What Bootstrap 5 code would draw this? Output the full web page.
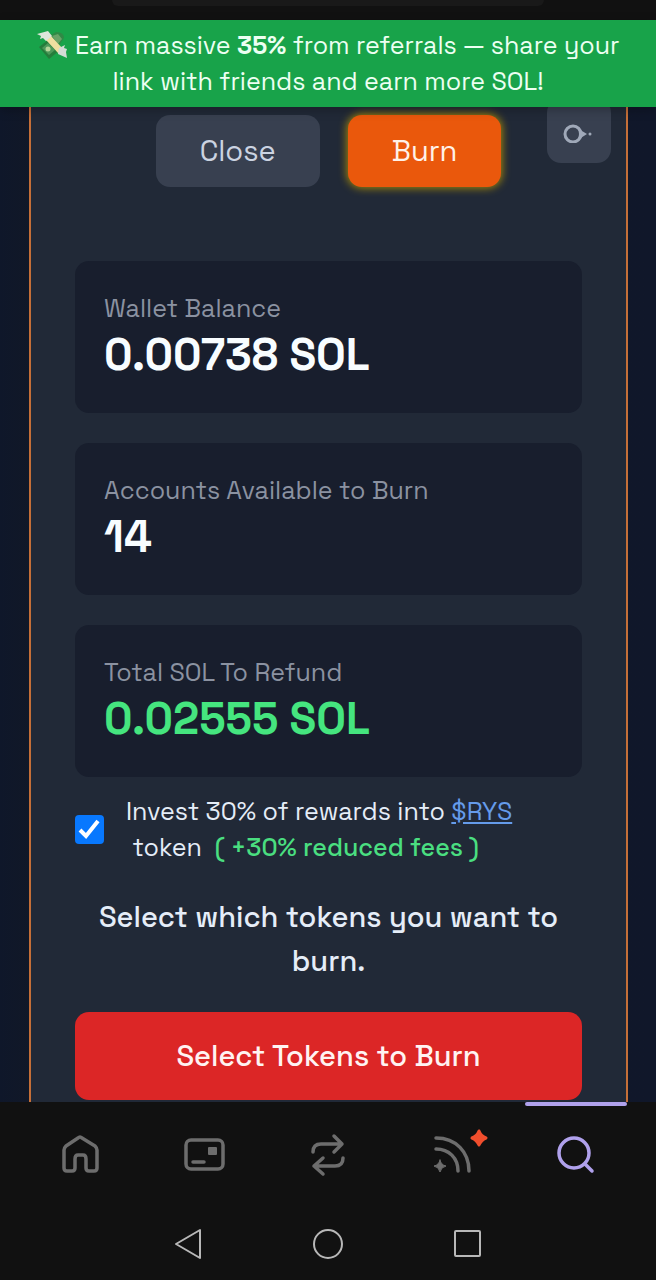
<!DOCTYPE html>
<html lang="en">
<head>
<meta charset="utf-8">
<meta name="viewport" content="width=device-width, initial-scale=1">
<title>Burn tokens</title>
<link href="https://cdn.jsdelivr.net/npm/bootstrap@5.3.0/dist/css/bootstrap.min.css" rel="stylesheet">
<style>
  body { background: #111; color: #e5edf8; font-family: "Space Grotesk", Inter, "Liberation Sans", sans-serif; font-size: 25px; line-height: 36px; }
  .address-strip { height: 20px; background: #111; }
  .address-pill { width: 66%; height: 6px; background: #191919; border-radius: 0 0 12px 12px; }
  .promo { background: #18a34a; color: #ecfff2; padding: 7px 28px 8px; box-shadow: 0 3px 10px rgba(0,0,0,.25); z-index: 2; }
  .promo svg { width: 30px; height: 28px; vertical-align: -5px; margin-right: 2px; }
  .page-area { background: linear-gradient(90deg, #0f172a, #111827 5%, #10172a); padding: 0 28px 0 29px; }
  .burn-panel { background: #212937; border: solid #c56f38; border-width: 0 2px; padding: 8px 44px 2px; }
  .mode { font-size: 29px; line-height: 44px; padding: 14px 44px; border: 0; border-radius: 14px; }
  .mode-close, .mode-close:hover, .tool-btn, .tool-btn:hover { background: #384050; color: #cbd3e1; }
  .mode-burn, .mode-burn:hover { background: #ea580c; color: #fff1e8; box-shadow: 0 0 8px 1px #a88c08; }
  .mode-row { gap: 28px; margin-bottom: 74px; }
  .tool-btn { top: -8px; right: 15px; width: 64px; height: 64px; border: 0; border-radius: 14px; padding: 0; }
  .stat { background: #181e2d; border-radius: 14px; padding: 29px; }
  .stat dt { color: #8b92a1; font-weight: 400; line-height: 36px; }
  .stat dd { color: #f8fdff; font-size: 44px; line-height: 58px; font-weight: 600; }
  .stat dd.gain { color: #45e57f; }
  .stats { gap: 30px; }
  .invest { gap: 22px; margin-top: 16px; }
  .invest .form-check-input { width: 29px; height: 29px; border: 0; border-radius: 4px; }
  .invest .form-check-input:checked { background-color: #0878fe; background-image: none; }
  .tick { pointer-events: none; inset: 0; }
  .token-link { color: #659bea; }
  .bonus { color: #4ade80; font-weight: 500; }
  .prompt { font-size: 29px; line-height: 44px; font-weight: 500; padding: 0 20px; margin: 30px 0 29px; }
  .select-btn, .select-btn:hover { background: #dc2626; color: #fff3f2; font-size: 29px; line-height: 44px; font-weight: 500; padding: 22px; border: 0; border-radius: 14px; }
  .tabs { height: 106px; padding: 0 18px; }
  .tabs a { color: #6d6d6d; }
  .tabs a.active { color: #b0a1ec; }
  .tabs a.active::before { content: ""; position: absolute; top: 0; left: 11px; right: 11px; height: 4px; border-radius: 2px; background: #b0a1ec; }
  .tabs svg { overflow: visible; }
  .system { height: 72px; padding-bottom: 4px; }
  .system button { width: 140px; color: #b8b8b8; background: none; border: 0; padding: 0; }
</style>
</head>
<body class="d-flex flex-column min-vh-100">
<div class="address-strip"><div class="address-pill mx-auto"></div></div>
<div class="promo text-center position-relative">
  <svg viewBox="0 0 30 28" aria-hidden="true">
    <path d="M12 5 19 1q8 0 8 6l-6 9z" fill="#2f8a45"/><path d="M15 5 21 3l4 5-4 5z" fill="#69a368"/>
    <path d="M2 16 11 9l12 10-11 9z" fill="#247d3b"/><path d="m5 17 6-5 7 7-6 5z" fill="#4d995a"/><circle cx="11" cy="18" r="2.500" fill="#b6d59a"/>
    <path d="m9 9 5-4 12 13-4 5z" fill="#f0dfa0"/>
    <path d="m0 3 11-3 4 5-6 5-3-3-3 1 1-3z" fill="#dde6db"/><path d="m22 17 6-3-1 3 3 1-1 3 1 6-9-4z" fill="#d3dcd6"/>
  </svg>
  Earn massive <strong>35%</strong> from referrals — share your<br>link with friends and earn more SOL!
</div>
<main class="page-area flex-grow-1 d-flex">
  <section class="burn-panel flex-grow-1 position-relative">
    <button class="tool-btn btn position-absolute" type="button" aria-label="Options">
      <svg class="d-block mx-auto" width="34" height="24" viewBox="0 0 34 24"><circle cx="11" cy="15" r="8" fill="none" stroke="#a0a9b9" stroke-width="3"/><path d="M15 7q4 5 10 8-6 3-10 8 4-8 0-16z" fill="#a0a9b9"/><circle cx="28" cy="15" r="1.500" fill="#a0a9b9"/></svg>
    </button>
    <div class="mode-row d-flex justify-content-center">
      <button class="btn mode mode-close" type="button">Close</button>
      <button class="btn mode mode-burn" type="button">Burn</button>
    </div>
    <div class="stats d-flex flex-column">
      <dl class="stat mb-0"><dt>Wallet Balance</dt><dd class="mb-0">0.00738 SOL</dd></dl>
      <dl class="stat mb-0"><dt>Accounts Available to Burn</dt><dd class="mb-0">14</dd></dl>
      <dl class="stat mb-0"><dt>Total SOL To Refund</dt><dd class="mb-0 gain">0.02555 SOL</dd></dl>
    </div>
    <div class="invest d-flex align-items-center">
      <span class="position-relative d-flex flex-shrink-0">
        <input class="form-check-input m-0" type="checkbox" id="invest" checked>
        <svg class="tick position-absolute" width="29" height="29" viewBox="0 0 29 29" aria-hidden="true"><path d="m5 15 6 6L23 6" fill="none" stroke="#fff" stroke-width="4"/></svg>
      </span>
      <label for="invest">Invest 30% of rewards into <a class="token-link" href="#rys">$RYS</a><br>&nbsp;token&nbsp; <span class="bonus">( +30% reduced fees )</span></label>
    </div>
    <p class="prompt text-center">Select which tokens you want to burn.</p>
    <button class="btn select-btn w-100" type="button">Select Tokens to Burn</button>
  </section>
</main>
<nav class="tabs d-flex" aria-label="Wallet">
  <a class="col d-flex align-items-center justify-content-center position-relative" href="#home" aria-label="Home">
    <svg width="44" height="44" viewBox="0 0 44 44" fill="none" stroke="currentColor" stroke-width="3.500" stroke-linejoin="round"><path d="M6 17q0-2 2-4L20 5q2-2 4 0l13 8q2 2 2 4v18q0 3-3 3h-5q-3 0-3-3V26q0-4-3-4h-5q-3 0-3 4v9q0 3-3 3H9q-3 0-3-3z"/></svg>
  </a>
  <a class="col d-flex align-items-center justify-content-center position-relative" href="#wallet" aria-label="Wallet">
    <svg width="44" height="44" viewBox="0 0 44 44" fill="none" stroke="currentColor" stroke-width="3.500"><rect x="4" y="7" width="37" height="29" rx="5"/><path d="M11 29h11" stroke-linecap="round"/><rect x="26" y="14" width="9" height="8" rx="1" fill="currentColor" stroke="none"/></svg>
  </a>
  <a class="col d-flex align-items-center justify-content-center position-relative" href="#swap" aria-label="Swap">
    <svg width="44" height="44" viewBox="0 0 44 44" fill="none" stroke="currentColor" stroke-width="3.500" stroke-linecap="round" stroke-linejoin="round"><path d="M7 19q0-8 8-8h21M28 3l8 8-8 8M37 25q0 8-8 8H8m9-8-9 8 9 8"/></svg>
  </a>
  <a class="col d-flex align-items-center justify-content-center position-relative" href="#feed" aria-label="Feed">
    <svg width="60" height="60" viewBox="0 0 60 60" fill="none" stroke="currentColor" stroke-width="3.500" stroke-linecap="round"><path d="M14 13c20 0 33 14 33 33M14 24c13 0 22 9 22 22"/><g stroke-linejoin="round"><path d="M18 35q1 5 6 6-5 1-6 6-1-5-6-6 5-1 6-6z" fill="currentColor" stroke-width="1"/><path d="M57 6q2 5 7 7-5 2-7 7-2-5-7-7 5-2 7-7z" fill="#f04e2d" stroke="#f04e2d" stroke-width="3"/></g></svg>
  </a>
  <a class="active col d-flex align-items-center justify-content-center position-relative" href="#search" aria-label="Search" aria-current="page">
    <svg width="44" height="44" viewBox="0 0 44 44" fill="none" stroke="currentColor" stroke-width="3.500" stroke-linecap="round"><circle cx="20" cy="20" r="15"/><path d="m31 31 7 7"/></svg>
  </a>
</nav>
<div class="system d-flex justify-content-center">
  <button type="button" aria-label="Back"><svg width="32" height="32" viewBox="0 0 32 32" fill="none" stroke="currentColor" stroke-width="2" stroke-linejoin="round"><path d="M28 2v28L4 16z"/></svg></button>
  <button type="button" aria-label="Home screen"><svg width="32" height="32" viewBox="0 0 32 32" fill="none" stroke="currentColor" stroke-width="2"><circle cx="16" cy="16" r="14"/></svg></button>
  <button type="button" aria-label="Recent apps"><svg width="32" height="32" viewBox="0 0 32 32" fill="none" stroke="currentColor" stroke-width="2"><rect x="3" y="3" width="25" height="25" rx="1"/></svg></button>
</div>
<script src="https://cdn.jsdelivr.net/npm/bootstrap@5.3.0/dist/js/bootstrap.bundle.min.js"></script>
</body>
</html>
